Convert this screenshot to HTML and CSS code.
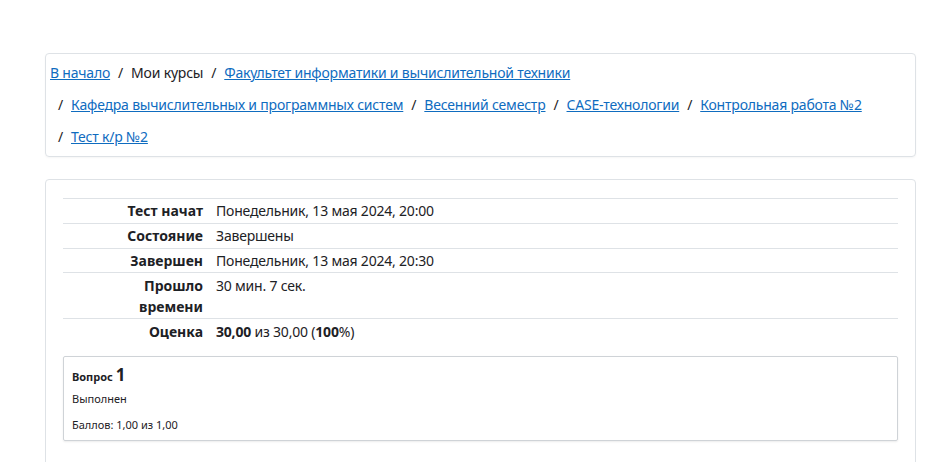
FILE: index.html
```html
<!DOCTYPE html>
<html lang="ru">
<head>
<meta charset="utf-8">
<link rel="stylesheet" href="styles.css">
</head>
<body>
<div class="page">
  <nav class="crumbs">
    <ol class="crumb-list">
      <li class="crumb"><a href="#">В начало</a></li>
      <li class="crumb">Мои курсы</li>
      <li class="crumb"><a href="#">Факультет информатики и вычислительной техники</a></li>
      <li class="crumb"><a href="#">Кафедра вычислительных и программных систем</a></li>
      <li class="crumb"><a href="#">Весенний семестр</a></li>
      <li class="crumb"><a href="#">CASE-технологии</a></li>
      <li class="crumb"><a href="#">Контрольная работа №2</a></li>
      <li class="crumb"><a href="#">Тест к/р №2</a></li>
    </ol>
  </nav>
  <main class="card">
    <table class="summary">
      <tr><th>Тест начат</th><td>Понедельник, 13 мая 2024, 20:00</td></tr>
      <tr><th>Состояние</th><td>Завершены</td></tr>
      <tr><th>Завершен</th><td>Понедельник, 13 мая 2024, 20:30</td></tr>
      <tr><th>Прошло времени</th><td>30 мин. 7 сек.</td></tr>
      <tr><th>Оценка</th><td><b>30,00</b> из 30,00 (<b>100</b>%)</td></tr>
    </table>
    <div class="question">
      <h3 class="qno">Вопрос <span class="qnum">1</span></h3>
      <div class="qstate">Выполнен</div>
      <div class="qgrade">Баллов: 1,00 из 1,00</div>
    </div>
  </main>
</div>
</body>
</html>
```
FILE: styles.css
```css
html, body {
  margin: 0;
  padding: 0;
  background: #fff;
}
body {
  font-family: "Noto Sans", "Open Sans", sans-serif;
  color: #1d2125;
  font-size: 14px;
}
.page {
  padding: 53px 17px 0 45px;
}
.crumbs {
  border: 1px solid #dee2e6;
  border-radius: 4px;
  padding: 3px 4px;
  box-shadow: 0 1px 2px rgba(0,0,0,0.04);
}
.crumb-list {
  list-style: none;
  margin: 0;
  padding: 0;
  display: flex;
  flex-wrap: wrap;
  font-size: 14px;
  letter-spacing: -0.2px;
  line-height: 32px;
}
.crumb + .crumb::before {
  content: "/";
  padding: 0 8px;
  color: #1d2125;
}
.crumb a {
  color: #0f6cbf;
  text-decoration: underline;
}
.card {
  margin-top: 22px;
  border: 1px solid #dee2e6;
  border-radius: 4px;
  padding: 18px 17px 60px;
}
.summary {
  width: 100%;
  border-collapse: collapse;
  table-layout: fixed;
  font-size: 14px;
  letter-spacing: -0.2px;
  line-height: 21px;
}
.summary th, .summary td {
  border-top: 1px solid #dee2e6;
  padding: 1.4px 7px;
  vertical-align: top;
}
.summary th {
  width: 110px;
  text-align: right;
  font-weight: 700;
  letter-spacing: 0;
  padding-left: 30px;
  padding-right: 5px;
}
.summary td {
  text-align: left;
  padding-left: 8px;
}
.question {
  margin-top: 13px;
  border: 1px solid #cfd3d7;
  border-radius: 2px;
  padding: 7px 8px 7px;
  box-shadow: 0 1px 2px rgba(0,0,0,0.08);
  font-size: 11px;
}
.qno {
  margin: 0;
  font-size: 11px;
  font-weight: 700;
  line-height: 22px;
}
.qnum {
  font-size: 17px;
}
.qstate {
  margin-top: 3px;
  line-height: 16px;
}
.qgrade {
  margin-top: 10px;
  line-height: 16px;
}
```
